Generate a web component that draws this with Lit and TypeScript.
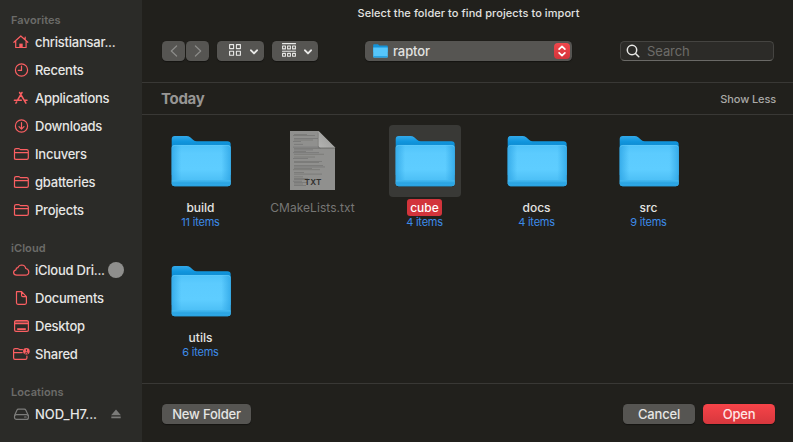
import { LitElement, html, css, svg, nothing } from "lit";
import { customElement, property } from "lit/decorators.js";
import { classMap } from "lit/directives/class-map.js";

const folderGlyph = svg`<path d="M2.5 14V5.2Q2.5 3.6 4.1 3.6H6.6Q7.3 3.6 7.8 4.1L8.4 4.6H14.7Q16.3 4.6 16.3 6.2V13Q16.3 14.4 14.9 14.4H3.9Q2.5 14.4 2.5 13M2.5 7.6H16.3"/>`;

const glyphs: Record<string, unknown> = {
  home: svg`<path d="M1.9 9.3 8.8 3 15.8 9.3M13.2 6.8V4.2M3.7 8V14.5H14.1V8"/><path class="solid" d="M7.3 14.8V10.6H10.7V14.8z"/>`,
  clock: svg`<circle cx="9.5" cy="9" r="6.1"/><path d="M9.5 5V9.4H6.3"/>`,
  apps: svg`<path class="thick" d="M7.6 3.5 13.9 14.2M10 3.5 5.4 11.4M2.4 11.3H9.3M12.4 11.3H15M4.6 13 3.9 14.2"/>`,
  download: svg`<circle cx="9.5" cy="9" r="6.1"/><path d="M9.5 5.6V12M7 9.6 9.5 12.1 12 9.6"/>`,
  folder: folderGlyph,
  cloud: svg`<path d="M4.8 14.2Q1.7 14.2 1.6 11.5Q1.7 9.2 4 8.8Q3.9 7 5.8 6.7Q7 4 9.7 4Q13 4.1 13.8 7.5Q16.8 8.2 16.8 11Q16.7 14.2 13.3 14.2z"/>`,
  doc: svg`<path d="M4.5 2.7H9.6L14.4 7.6V13.8Q14.4 15.3 12.9 15.3H6Q4.5 15.3 4.5 13.8zM9.6 2.7V6.4Q9.6 7.6 10.8 7.6H14.4"/>`,
  desktop: svg`<rect x="2.6" y="3.6" width="13.8" height="10.8" rx="1.4"/><path d="M2.6 5H16.4M2.6 6.6H16.4"/><path class="solid" d="M5.2 11.2H13.8V13H5.2z"/>`,
  shared: svg`<path d="M10.4 4.7H7.6L6.8 4.1Q6.2 3.6 5.5 3.6H3.1Q1.6 3.6 1.6 5.1V13Q1.6 14.4 3 14.4H13.4Q14.9 14.4 14.9 13V11M1.6 7.6H10.2"/><circle class="solid" cx="14.4" cy="6.3" r="3.3"/><path class="cut" d="M14.4 4.7V5.9M13 8.2Q14.4 6.9 15.8 8.2"/>`,
  disk: svg`<path d="M2.6 10.6 4.9 5.2Q5.4 4.2 6.5 4.2H12.3Q13.4 4.2 13.9 5.2L16.3 10.6"/><rect x="2.5" y="9.6" width="13.9" height="4.8" rx="2"/><path d="M12.6 12H14.2"/>`,
};

interface Place { icon: string; label: string; extra?: "sync" | "eject"; muted?: boolean; }
const sections: { title: string; places: Place[] }[] = [
  {
    title: "Favorites",
    places: [
      { icon: "home", label: "christiansar..." },
      { icon: "clock", label: "Recents" },
      { icon: "apps", label: "Applications" },
      { icon: "download", label: "Downloads" },
      { icon: "folder", label: "Incuvers" },
      { icon: "folder", label: "gbatteries" },
      { icon: "folder", label: "Projects" },
    ],
  },
  {
    title: "iCloud",
    places: [
      { icon: "cloud", label: "iCloud Dri...", extra: "sync" },
      { icon: "doc", label: "Documents" },
      { icon: "desktop", label: "Desktop" },
      { icon: "shared", label: "Shared" },
    ],
  },
  { title: "Locations", places: [{ icon: "disk", label: "NOD_H7...", extra: "eject", muted: true }] },
];

@customElement("side-bar")
export class SideBar extends LitElement {
  static styles = css`
    :host { display: block; box-sizing: border-box; width: 142px; flex: none; padding-top: 12px; background: #2b2b28; overflow: hidden; }
    .section { margin-bottom: 16px; }
    .title { height: 16px; line-height: 16px; padding-left: 11px; font-size: 11px; font-weight: 600; color: #6b6b69; letter-spacing: 0.08px; }
    .row { display: flex; align-items: center; height: 28px; padding-left: 12px; color: #e6e6e5; font-weight: 500; white-space: nowrap; }
    .glyph { width: 18px; height: 18px; flex: none; fill: none; stroke: #fb5f62; stroke-width: 1.2; stroke-linejoin: round; stroke-linecap: round; margin-right: 5px; overflow: visible; }
    .glyph .solid { fill: #fb5f62; stroke: none; }
    .glyph .thick { stroke-width: 1.5; }
    .glyph .cut { stroke: #2b2b28; stroke-width: 1; }
    .muted .glyph { stroke: #7d7d7b; }
    .label { line-height: 18px; letter-spacing: -0.24px; }
    .sync { width: 16px; height: 16px; border-radius: 50%; background: #8f8f8d; margin-left: auto; margin-right: 18px; }
    .eject { width: 10px; height: 10px; fill: #7b7b79; margin-left: auto; margin-right: 21px; }
    .muted .label { letter-spacing: -0.05px; }
  `;
  render() {
    return sections.map((s) => html`<div class="section">
      <div class="title">${s.title}</div>
      ${s.places.map((p) => html`<div class=${classMap({ row: true, muted: !!p.muted })}>
        <svg class="glyph" viewBox="0 0 18 18">${glyphs[p.icon]}</svg>
        <span class="label">${p.label}</span>
        ${p.extra === "sync" ? html`<span class="sync"></span>` : nothing}
        ${p.extra === "eject" ? html`<svg class="eject" viewBox="0 0 10 10"><path d="M5 .6 9.9 6.2H.1zM.3 7.4H9.7V9.2H.3z"/></svg>` : nothing}
      </div>`)}
    </div>`);
  }
}

const folderArt = html`<svg width="72" height="72" viewBox="0 0 72 72">
  <defs>
    <linearGradient id="back" x1="0" y1="0" x2="0" y2="1">
      <stop offset="0" stop-color="#33a9ea"/><stop offset=".14" stop-color="#1196de"/><stop offset=".3" stop-color="#0a86cc"/>
    </linearGradient>
    <linearGradient id="front" x1="0" y1="0" x2="0" y2="1">
      <stop offset="0" stop-color="#50c3f9"/><stop offset=".2" stop-color="#5ccbfe"/><stop offset=".6" stop-color="#5ecdff"/><stop offset="1" stop-color="#43b8f1"/>
    </linearGradient>
    <linearGradient id="sides">
      <stop offset="0" stop-color="#2ba3e4" stop-opacity=".75"/><stop offset=".16" stop-color="#2ba3e4" stop-opacity="0"/>
      <stop offset=".84" stop-color="#2ba3e4" stop-opacity="0"/><stop offset="1" stop-color="#2ba3e4" stop-opacity=".75"/>
    </linearGradient>
    <linearGradient id="lip" x1="0" y1="0" x2="0" y2="1">
      <stop offset="0" stop-color="#3fb5ee"/><stop offset="1" stop-color="#27a2e2"/>
    </linearGradient>
  </defs>
  <path fill="#00000055" d="M7.2 20H65.2V59.5Q65.2 62.1 62.5 62.1H10Q7.2 62.1 7.2 59.5z"/>
  <path fill="url(#back)" d="M6.7 50V14Q6.7 11 9.7 11H21.5Q23.6 11 25.2 12.3L28.3 15Q29.8 16.2 31.8 16.2H62.4Q65.7 16.2 65.7 19.4V50z"/>
  <path fill="url(#front)" d="M6.7 23Q6.7 20 9.7 20H62.7Q65.7 20 65.7 23V58.3Q65.7 61.3 62.7 61.3H9.7Q6.7 61.3 6.7 58.3z"/>
  <path fill="url(#sides)" d="M6.7 23Q6.7 20 9.7 20H62.7Q65.7 20 65.7 23V55.2H6.7z"/>
  <path fill="url(#lip)" d="M6.7 55.2H65.7V58.3Q65.7 61.3 62.7 61.3H9.7Q6.7 61.3 6.7 58.3z"/>
  <path fill="none" stroke="#6fd2fb" stroke-opacity=".6" stroke-width=".7" d="M7.4 22.2Q8 20.4 9.9 20.4H62.5Q64.4 20.4 65 22.2"/>
  <path stroke="#1e94d4" stroke-width=".5" d="M7 58H65.5"/>
</svg>`;

const lineWidths = [13, 22, 0, 24, 19, 8, 0, 9, 0, 25, 27, 19, 12, 26, 30, 0, 21, 15, 0, 28, 25, 0, 29, 31, 18, 27, 0, 10, 28, 0, 9, 14, 11, 9, 13, 9, 12];
const txtArt = html`<svg width="72" height="72" viewBox="0 0 72 72">
  <defs><linearGradient id="fold" x1="0" y1="1" x2="1" y2="0">
    <stop offset="0" stop-color="#b4b4b2"/><stop offset=".5" stop-color="#a4a4a2"/><stop offset="1" stop-color="#8b8b89"/>
  </linearGradient></defs>
  <path fill="#90908e" d="M13 6H41.5L58 22.5V65H13z"/>
  ${lineWidths.map((w, i) => svg`<rect x=${i % 4 === 1 ? 16 : 17} y=${9 + i * 1.42} width=${w} height=".6" fill="#5c5c5a" opacity=".65"/>`)}
  <path fill="#747472" d="M40.8 7.5V21Q40.8 23.7 43.5 23.7H58V22.5z"/>
  <path fill="url(#fold)" d="M41.5 6 58 22.5H43.5Q41.5 22.5 41.5 20.5z"/>
  <text class="kind" x="27.6" y="60">TXT</text>
</svg>`;

@customElement("file-tile")
export class FileTile extends LitElement {
  @property() name = "";
  @property() count = "";
  @property({ type: Boolean }) selected = false;
  static styles = css`
    :host { display: flex; flex-direction: column; align-items: center; width: 112px; height: 130px; }
    .art { width: 72px; height: 72px; border-radius: 4px; }
    .art svg { display: block; }
    .art.on { background: #393936; }
    .name { margin: 2px 1px 0 0; height: 17px; line-height: 18px; padding: 0 3.5px; border-radius: 3px; font-size: 12px; font-weight: 500; color: #e4e4e2; white-space: nowrap; }
    .name.on { background: #d2343b; color: #fff; }
    .name.dim { color: #777775; font-weight: 400; letter-spacing: 0.05px; }
    .count { font-size: 11px; line-height: 13px; color: #3d8be8; letter-spacing: -0.22px; margin-right: 1px; }
    .kind { font: 600 8.2px Inter, sans-serif; letter-spacing: 0.25px; fill: #30302e; }
  `;
  render() {
    return html`<div class=${classMap({ art: true, on: this.selected })}>${this.count ? folderArt : txtArt}</div>
      <div class=${classMap({ name: true, on: this.selected, dim: !this.count })}>${this.name}</div>
      <div class="count">${this.count}</div>`;
  }
}

const files = [
  { name: "build", count: "11 items" },
  { name: "CMakeLists.txt", count: "" },
  { name: "cube", count: "4 items", selected: true },
  { name: "docs", count: "4 items" },
  { name: "src", count: "9 items" },
  { name: "utils", count: "6 items" },
];

const chevron = html`<svg class="chev" width="8" height="6" viewBox="0 0 8 6"><path d="M1 1.3 4 4.4 7 1.3"/></svg>`;

@customElement("app-root")
export class AppRoot extends LitElement {
  static styles = css`
    :host { display: flex; width: 793px; height: 442px; overflow: hidden; background: #21201c; color: #e2e2e0; font: 13px/16px Inter, "Liberation Sans", sans-serif; }
    .main { flex: 1; display: flex; flex-direction: column; min-width: 0; }
    .main > * { flex-shrink: 0; }
    .message { height: 27px; line-height: 27px; text-align: center; font-size: 11px; font-weight: 500; letter-spacing: 0.07px; padding-left: 2px; }
    .toolbar { display: flex; height: 56px; box-sizing: border-box; padding: 14px 19px 0 20px; border-bottom: 1px solid #393835; }
    .btn { box-sizing: border-box; height: 20px; border-radius: 4.5px; background: #565552; display: flex; align-items: center; justify-content: center; box-shadow: 0 0.5px 1px #0006; }
    svg { fill: none; stroke: #e8e8e6; stroke-linecap: round; stroke-linejoin: round; flex: none; }
    .nav { width: 23px; }
    .nav svg { stroke: #8c8c89; stroke-width: 1.2; margin-top: -1px; }
    .nav + .nav { margin-left: 1px; }
    .view { width: 47px; margin-left: 8px; justify-content: flex-start; padding-left: 12px; }
    .group { width: 46px; padding-left: 10px; }
    .view svg { stroke-width: 1.1; margin-top: -2px; }
    .view .chev { stroke-width: 1.9; margin: 1px 0 0 9px; }
    .group .chev { margin-left: 8px; }
    .path { width: 207px; margin-left: 47px; justify-content: flex-start; padding: 0 2px 0 8px; font-weight: 500; letter-spacing: -0.1px; }
    .path .mini { margin-right: 5px; stroke: none; }
    .stepper { margin-left: auto; width: 16px; height: 16px; border-radius: 4px; background: linear-gradient(#f0474c, #d4343a); display: flex; }
    .stepper svg { stroke: #fff; stroke-width: 1.7; }
    .folder-name { margin-top: -1px; }
    .search { box-sizing: border-box; margin-left: auto; width: 154px; height: 20px; border: 1px solid #454441; border-bottom-color: #6a6966; border-radius: 4.5px; background: #2c2b28; display: flex; align-items: center; padding-left: 5px; color: #6c6b68; letter-spacing: -0.08px; }
    .search svg { margin: -1px 7px 0 0; stroke-width: 1.5; }
    .group-head { height: 31px; border-bottom: 1px solid #393835; display: flex; align-items: center; justify-content: space-between; padding: 0 17px 0 19px; }
    .today { font-size: 15px; font-weight: 700; color: #979694; letter-spacing: -0.3px; }
    .less { font-size: 11px; font-weight: 500; color: #aaa9a7; letter-spacing: -0.12px; margin-top: 1px; }
    .grid { height: 258px; display: grid; grid-template-columns: repeat(5, 112px); grid-auto-rows: 130px; padding: 10px 0 0 3px; }
    .footer { box-sizing: border-box; height: 59px; border-top: 1px solid #393835; display: flex; padding: 20px 18px 0 20px; gap: 8px; }
    .text { font-weight: 500; color: #e6e6e4; width: 72px; letter-spacing: -0.18px; padding-bottom: 1px; }
    .new { width: 89px; margin-right: auto; }
    .open { background: linear-gradient(#f74449, #d7373d); color: #ffe6e6; }
  `;
  render() {
    return html`<side-bar></side-bar>
      <div class="main">
        <div class="message">Select the folder to find projects to import</div>
        <div class="toolbar">
          <div class="btn nav"><svg width="8" height="12" viewBox="0 0 8 12"><path d="M6.6 1 1.3 6 6.6 11"/></svg></div>
          <div class="btn nav"><svg width="8" height="12" viewBox="0 0 8 12"><path d="M1.4 1 6.7 6 1.4 11"/></svg></div>
          <div class="btn view">
            <svg width="12" height="12" viewBox="0 0 12 12"><path d="M.6.6h4v4h-4zM7.4.6h4v4h-4zM.6 7.2h4v4h-4zM7.4 7.2h4v4h-4z"/></svg>${chevron}
          </div>
          <div class="btn view group">
            <svg width="14" height="14" viewBox="0 0 14 14"><path d="M.5.6h13M.5 8.3h13M.6 3h2.8v2.9H.6zM5.6 3h2.8v2.9H5.6zM10.6 3h2.8v2.9h-2.8zM.6 10.4h2.8v2.9H.6zM5.6 10.4h2.8v2.9H5.6zM10.6 10.4h2.8v2.9h-2.8z"/></svg>${chevron}
          </div>
          <div class="btn path">
            <svg class="mini" width="15" height="14" viewBox="0 0 15 14"><path fill="#1593d8" d="M.2 1Q.2.3 1 .3H5L6.3 1.4H14Q14.8 1.4 14.8 2.2V8H.2z"/><path fill="#56c6fb" d="M.2 3.5H14.8V12.8Q14.8 13.6 14 13.6H1Q.2 13.6.2 12.8z"/><path fill="#29a4e4" d="M.2 11.9H14.8V12.8Q14.8 13.6 14 13.6H1Q.2 13.6.2 12.8z"/></svg>
            <span class="folder-name">raptor</span>
            <span class="stepper"><svg width="16" height="16" viewBox="0 0 16 16"><path d="M5.1 6.2 8 3.4 10.9 6.2M5.1 9.9 8 12.7 10.9 9.9"/></svg></span>
          </div>
          <div class="search"><svg width="14" height="14" viewBox="0 0 14 14"><circle cx="6" cy="6" r="4.7"/><path d="M9.5 9.5 12.8 12.8"/></svg>Search</div>
        </div>
        <div class="group-head"><span class="today">Today</span><span class="less">Show Less</span></div>
        <div class="grid">
          ${files.map((f) => html`<file-tile .name=${f.name} .count=${f.count} .selected=${!!f.selected}></file-tile>`)}
        </div>
        <div class="footer">
          <div class="btn text new">New Folder</div>
          <div class="btn text">Cancel</div>
          <div class="btn text open">Open</div>
        </div>
      </div>`;
  }
}
